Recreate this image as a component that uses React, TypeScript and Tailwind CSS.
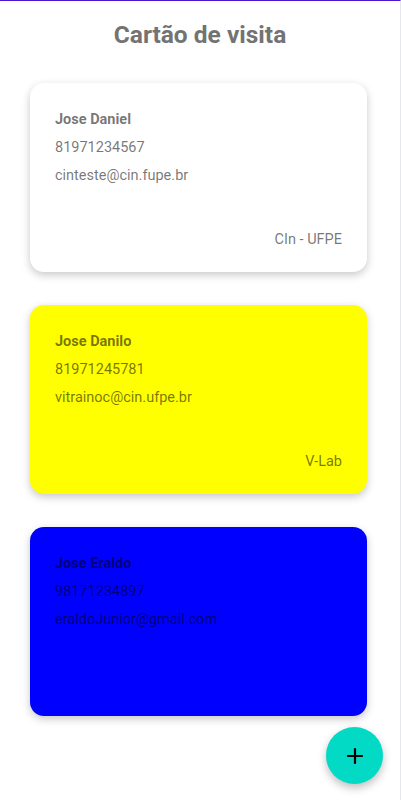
import { Plus } from "lucide-react";

const cards = [
  { name: "Jose Daniel", phone: "81971234567", email: "cinteste@cin.fupe.br", org: "CIn - UFPE", bg: "bg-white" },
  { name: "Jose Danilo", phone: "81971245781", email: "vitrainoc@cin.ufpe.br", org: "V-Lab", bg: "bg-[#ffff00]" },
  { name: "Jose Eraldo", phone: "98171234897", email: "eraldoJunior@gmail.com", org: "", bg: "bg-[#0000ff]" },
];

function Card({ name, phone, email, org, bg }: (typeof cards)[number]) {
  return (
    <div
      className={`${bg} h-[189px] rounded-[14px] shadow-[0_3px_8px_rgba(0,0,0,0.22)] px-[25px] pt-[27px] pb-[22px] flex flex-col justify-between text-[14.5px] leading-5 text-black/55`}
    >
      <div className="flex flex-col gap-2">
        <div className="font-bold">{name}</div>
        <div>{phone}</div>
        <div>{email}</div>
      </div>
      <div className="text-right h-5">{org}</div>
    </div>
  );
}

export default function App() {
  return (
    <div
      className="relative w-[401px] min-h-[800px] bg-white border-r border-gray-200 border-t border-t-[#5014d0]"
      style={{ fontFamily: "Roboto, sans-serif" }}
    >
      <h1 className="text-center text-[24.5px] leading-7 font-bold text-[#737373] pt-[20px]">Cartão de visita</h1>
      <div className="flex flex-col gap-[33px] px-[30px] pt-[34px] mr-[3px]">
        {cards.map((c) => (
          <Card key={c.name} {...c} />
        ))}
      </div>
      <button className="absolute right-[17px] top-[726px] w-[57px] h-[57px] rounded-full bg-[#03dac5] flex items-center justify-center shadow-[0_4px_8px_rgba(0,0,0,0.25)]">
        <Plus size={24} strokeWidth={2.2} color="#000" />
      </button>
    </div>
  );
}
